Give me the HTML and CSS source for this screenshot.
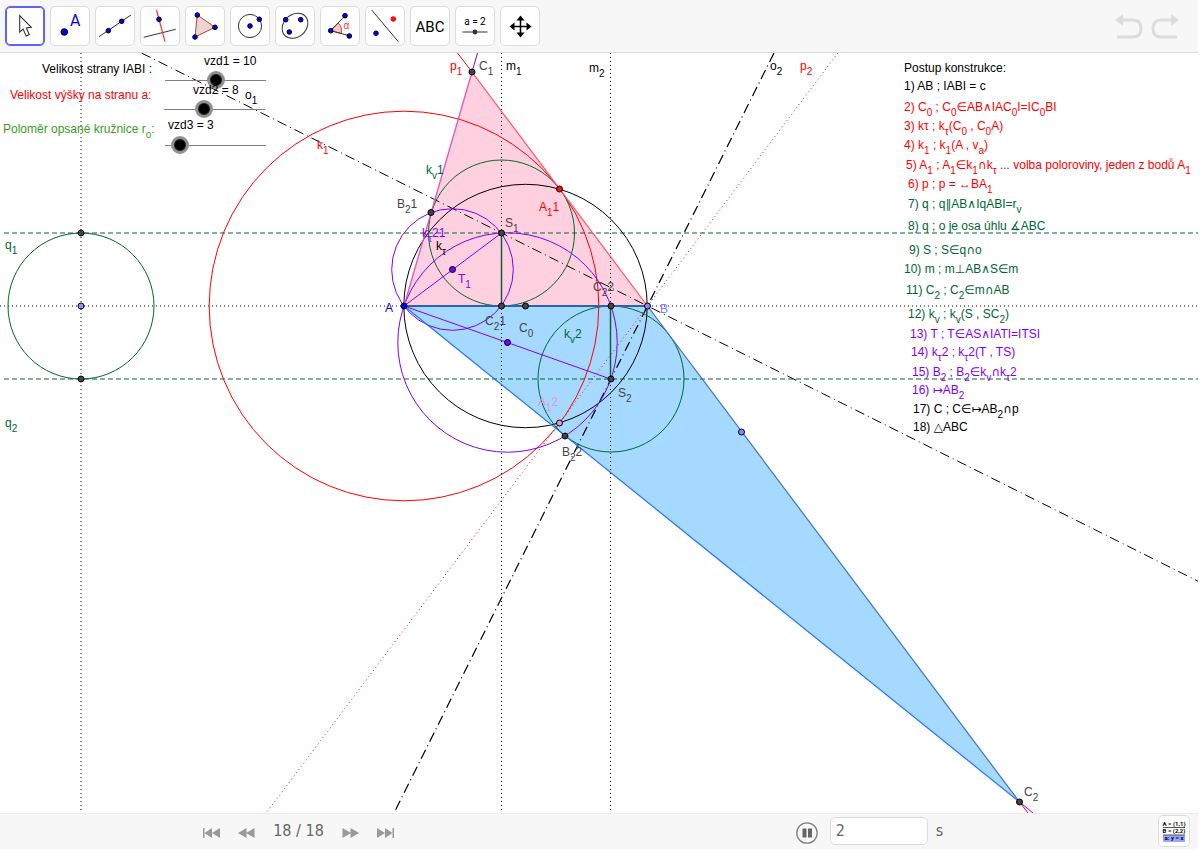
FILE: index.html
```html
<!DOCTYPE html>
<html lang="cs">
<head>
    <meta charset="UTF-8">
    <meta name="viewport" content="width=device-width, initial-scale=1.0">
    <title>Konstrukce trojúhelníku</title>
    <link rel="stylesheet" href="styles.css">
</head>
<body>
    <header class="toolbar">
        <button class="tool selected" aria-label="Move">
            <svg viewBox="1 1 38 38"><path d="M14.7 9.7V26l3.4-2.9 3.1 7 3.1-1.5-3-6.7 5-.6z" fill="#fff" stroke="#333" stroke-width="1.1"/></svg>
        </button>
        <button class="tool" aria-label="Point">
            <svg viewBox="1 1 38 38"><circle cx="14.3" cy="26" r="3.3" class="dot"/><text x="20" y="20" class="icon-a">A</text></svg>
        </button>
        <button class="tool" aria-label="Line">
            <svg viewBox="1 1 38 38"><path d="M4 30.7L36 9" class="thin"/><circle cx="13.3" cy="24.7" r="2.3" class="dot"/><circle cx="26.7" cy="15.3" r="2.3" class="dot"/></svg>
        </button>
        <button class="tool" aria-label="Perpendicular line">
            <svg viewBox="1 1 38 38"><path d="M3.7 31.3l32-8" class="thin"/><path d="M16.5 4L25 35.7" stroke="#f33" stroke-width="1.2"/><circle cx="19" cy="13.3" r="2.3" class="dot"/></svg>
        </button>
        <button class="tool" aria-label="Polygon">
            <svg viewBox="1 1 38 38"><path d="M12.3 9L30 21.3 10 31z" fill="#ebd5cf" stroke="#b04040" stroke-width="1"/><circle cx="12.3" cy="9" r="2.3" class="dot"/><circle cx="30" cy="21.3" r="2.3" class="dot"/><circle cx="10" cy="31" r="2.3" class="dot"/></svg>
        </button>
        <button class="tool" aria-label="Circle">
            <svg viewBox="1 1 38 38"><circle cx="20" cy="20" r="11.6" class="thin"/><circle cx="20" cy="20" r="2.3" class="dot"/><circle cx="29.3" cy="13.3" r="2.3" class="dot"/></svg>
        </button>
        <button class="tool" aria-label="Ellipse">
            <svg viewBox="1 1 38 38"><ellipse cx="20" cy="19.8" rx="14" ry="11.2" transform="rotate(-42 20 19.8)" class="thin"/><circle cx="10.7" cy="13.7" r="2.3" class="dot"/><circle cx="25.7" cy="13.7" r="2.3" class="dot"/><circle cx="14.3" cy="26" r="2.3" class="dot"/></svg>
        </button>
        <button class="tool" aria-label="Angle">
            <svg viewBox="1 1 38 38"><path d="M10.7 24.7L18.2 17a10.8 10.8 0 0 1 3 10.4z" fill="#fbc8c8" stroke="#f33" stroke-width="1"/><path d="M25 9.7L10.7 24.7l18.6 5" class="thin"/><circle cx="10.7" cy="24.7" r="2.3" class="dot"/><circle cx="25" cy="9.7" r="2.3" class="dot"/><circle cx="29.3" cy="30" r="2.3" class="dot"/><text x="23.5" y="23" class="icon-alpha">α</text></svg>
        </button>
        <button class="tool" aria-label="Reflect about line">
            <svg viewBox="1 1 38 38"><path d="M6.7 4l26.6 31.7" class="thin"/><circle cx="28.3" cy="13" r="2.3" class="dot red"/><circle cx="11" cy="27.3" r="2.3" class="dot"/></svg>
        </button>
        <button class="tool" aria-label="Text">
            <svg viewBox="1 1 38 38"><text x="20" y="26" class="icon-abc">ABC</text></svg>
        </button>
        <button class="tool" aria-label="Slider">
            <svg viewBox="1 1 38 38"><text x="20" y="19" class="icon-slider">a = 2</text><path d="M7.5 26h25" class="thin"/><circle cx="20" cy="26" r="2.4" fill="#333"/></svg>
        </button>
        <button class="tool" aria-label="Move graphics view">
            <svg viewBox="1 1 38 38"><path d="M12 20.5h17M20.5 12v17" stroke="#000" stroke-width="1.5"/><path d="M9.5 20.5l5-4v8zM31.5 20.5l-5-4v8zM20.5 9.5l-4 5h8zM20.5 31.5l-4-5h8z" fill="#000"/></svg>
        </button>
        <div class="history">
            <button aria-label="Undo" disabled>
                <svg width="29" height="26" viewBox="0 0 29 26"><path d="M8 7h11q8 0 8 8.500t-8 8.500H3" class="arc"/><path d="M1 7l8-6v12z" class="head"/></svg>
            </button>
            <button aria-label="Redo" disabled>
                <svg width="29" height="26" viewBox="0 0 29 26"><path d="M21 7H10q-8 0-8 8.500t8 8.500h16" class="arc"/><path d="M28 7l-8-6v12z" class="head"/></svg>
            </button>
        </div>
    </header>

    <main class="canvas">
        <svg class="drawing">
            <g transform="translate(0 -53)">
                <!-- triangles -->
                <path d="M404 306L647.500 306 472 72z" fill="#ffd0e0"/>
                <path d="M404 306L647.500 306 1019.500 802z" fill="#a6d9ff"/>

                <!-- axes, parallels and bisectors -->
                <path d="M81 53V813M501.500 53V813M610.500 53V813M0 306H2000" class="dotted"/>
                <path d="M4 233H2000M4 379H2000" class="dashed"/>
                <path d="M141.500 53L1198 581.200" class="dashdot"/>
                <path d="M774 53L394 813" class="dashdot strong"/>
                <path d="M837.800 53L266.200 813" class="dotted p2"/>

                <!-- circles -->
                <circle cx="81" cy="306" r="73" class="green"/>
                <circle cx="404" cy="306" r="194.800" class="red"/>
                <circle cx="525.500" cy="306" r="121.700" class="black"/>
                <circle cx="501.500" cy="233" r="73" class="green"/>
                <circle cx="611" cy="379" r="73" class="green"/>
                <circle cx="452.500" cy="269.500" r="60.800" class="purple"/>
                <circle cx="507.500" cy="342.500" r="109.700" class="purple"/>

                <!-- segments -->
                <path d="M404 306L501.500 233M404 306L610.500 379" class="purple"/>
                <path d="M472 72L477.500 53M1019.500 802L1033 813" class="purple"/>
                <path d="M472 72L457.500 53M1019.500 802L1028 813" class="red"/>
                <path d="M501.500 233V306M610.500 306V379" class="radius"/>
                <path d="M404 306L472 72" stroke="#e055bb" stroke-width="1.300"/>
                <path d="M472 72L647.500 306" stroke="#ff5566" stroke-width="1.200"/>
                <path d="M404 306L1019.500 802" stroke="#1f74ff" stroke-width="1.200"/>
                <path d="M647.500 306L1019.500 802" stroke="#4770b8" stroke-width="1.200"/>
                <path d="M404 306H647.500" stroke="#2d62b0" stroke-width="2"/>

                <!-- points -->
                <g class="points">
                    <circle cx="81" cy="233" r="3"/>
                    <circle cx="81" cy="306" r="3" fill="#9090ff"/>
                    <circle cx="81" cy="379" r="3"/>
                    <circle cx="404" cy="306" r="3" fill="#0000ff"/>
                    <circle cx="501.500" cy="306" r="3"/>
                    <circle cx="525.500" cy="306" r="3"/>
                    <circle cx="611" cy="306" r="3"/>
                    <circle cx="647.500" cy="306" r="3" fill="#8888ff"/>
                    <circle cx="472" cy="72" r="3"/>
                    <circle cx="431" cy="212.500" r="3"/>
                    <circle cx="501.500" cy="233" r="3"/>
                    <circle cx="559.500" cy="189" r="3" fill="#ff1010"/>
                    <circle cx="452.500" cy="269.500" r="3" fill="#7d00ff"/>
                    <circle cx="507.500" cy="342.500" r="3" fill="#7d00ff"/>
                    <circle cx="611" cy="379" r="3"/>
                    <circle cx="559.500" cy="423" r="3" fill="#e896cc"/>
                    <circle cx="565" cy="436" r="3"/>
                    <circle cx="741.500" cy="432" r="3" fill="#8888ff"/>
                    <circle cx="1019.500" cy="802" r="3"/>
                </g>

                <!-- point and line labels -->
                <g class="c-gray">
                    <text x="479" y="70">C<tspan class="sub" dy="5">1</tspan></text>
                    <text x="397" y="208">B<tspan class="sub" dy="5">2</tspan><tspan dy="-5">1</tspan></text>
                    <text x="505" y="227">S<tspan class="sub" dy="5">1</tspan></text>
                    <text x="593" y="291">C<tspan class="sub" dy="5">2</tspan><tspan dy="-5">2</tspan></text>
                    <text x="485" y="325">C<tspan class="sub" dy="5">2</tspan><tspan dy="-5">1</tspan></text>
                    <text x="519" y="332">C<tspan class="sub" dy="5">0</tspan></text>
                    <text x="618" y="397">S<tspan class="sub" dy="5">2</tspan></text>
                    <text x="562" y="456">B<tspan class="sub" dy="5">2</tspan><tspan dy="-5">2</tspan></text>
                    <text x="1024" y="796">C<tspan class="sub" dy="5">2</tspan></text>
                </g>
                <g class="c-black">
                    <text x="42" y="73">Velikost strany IABI :</text>
                    <text x="245" y="99">o<tspan class="sub" dy="5">1</tspan></text>
                    <text x="506" y="70">m<tspan class="sub" dy="5">1</tspan></text>
                    <text x="589" y="72">m<tspan class="sub" dy="5">2</tspan></text>
                    <text x="770" y="70">o<tspan class="sub" dy="5">2</tspan></text>
                    <text x="436" y="250">k<tspan class="sub" dy="5">τ</tspan></text>
                </g>
                <g class="c-red">
                    <text x="10" y="99">Velikost výšky na stranu a:</text>
                    <text x="450" y="70">p<tspan class="sub" dy="5">1</tspan></text>
                    <text x="800" y="70">p<tspan class="sub" dy="5">2</tspan></text>
                    <text x="317" y="149">k<tspan class="sub" dy="5">1</tspan></text>
                    <text x="539" y="211">A<tspan class="sub" dy="5">1</tspan><tspan dy="-5">1</tspan></text>
                </g>
                <text x="3" y="133" fill="#38a01c">Poloměr opsané kružnice r<tspan class="sub" dy="5">o</tspan><tspan dy="-5">:</tspan></text>
                <g class="c-green">
                    <text x="426" y="174">k<tspan class="sub" dy="5">v</tspan><tspan dy="-5">1</tspan></text>
                    <text x="564" y="338">k<tspan class="sub" dy="5">v</tspan><tspan dy="-5">2</tspan></text>
                    <text x="5" y="249">q<tspan class="sub" dy="5">1</tspan></text>
                    <text x="5" y="427">q<tspan class="sub" dy="5">2</tspan></text>
                </g>
                <g class="c-purple">
                    <text x="422" y="237">k<tspan class="sub" dy="5">τ</tspan><tspan dy="-5">21</tspan></text>
                    <text x="458" y="283">T<tspan class="sub" dy="5">1</tspan></text>
                </g>
                <text x="385" y="312" fill="#0000ff">A</text>
                <text x="660" y="313" fill="#8080ff">B</text>
                <text x="538" y="406" fill="#e896cc">A<tspan class="sub" dy="5">1</tspan><tspan dy="-5">2</tspan></text>

                <!-- construction steps -->
                <g class="c-black">
                    <text x="904" y="72">Postup konstrukce:</text>
                    <text x="904" y="90">1) AB ; IABI = c</text>
                </g>
                <g class="c-red">
                    <text x="904" y="111">2) C<tspan class="sub" dy="5">0</tspan><tspan dy="-5"> ; C</tspan><tspan class="sub" dy="5">0</tspan><tspan dy="-5">∈AB∧IAC</tspan><tspan class="sub" dy="5">0</tspan><tspan dy="-5">I=IC</tspan><tspan class="sub" dy="5">0</tspan><tspan dy="-5">BI</tspan></text>
                    <text x="904" y="130">3) kτ ; k<tspan class="sub" dy="5">τ</tspan><tspan dy="-5">(C</tspan><tspan class="sub" dy="5">0</tspan><tspan dy="-5"> , C</tspan><tspan class="sub" dy="5">0</tspan><tspan dy="-5">A)</tspan></text>
                    <text x="904" y="149">4) k<tspan class="sub" dy="5">1</tspan><tspan dy="-5"> ; k</tspan><tspan class="sub" dy="5">1</tspan><tspan dy="-5">(A , v</tspan><tspan class="sub" dy="5">a</tspan><tspan dy="-5">)</tspan></text>
                    <text x="906" y="169">5) A<tspan class="sub" dy="5">1</tspan><tspan dy="-5"> ; A</tspan><tspan class="sub" dy="5">1</tspan><tspan dy="-5">∈k</tspan><tspan class="sub" dy="5">1</tspan><tspan class="sym" dy="-5">∩</tspan>k<tspan class="sub" dy="5">τ</tspan><tspan dy="-5"> ... volba poloroviny, jeden z bodů A</tspan><tspan class="sub" dy="5">1</tspan></text>
                    <text x="908" y="188">6) p ; p = ↔BA<tspan class="sub" dy="5">1</tspan></text>
                </g>
                <g class="c-green">
                    <text x="908" y="208">7) q ; q∥AB∧IqABI=r<tspan class="sub" dy="5">v</tspan></text>
                    <text x="908" y="230">8) q ; o je osa úhlu ∡ABC</text>
                    <text x="909" y="254">9) S ; S∈q<tspan class="sym">∩</tspan>o</text>
                    <text x="904" y="273">10) m ; m⊥AB∧S∈m</text>
                    <text x="906" y="294">11) C<tspan class="sub" dy="5">2</tspan><tspan dy="-5"> ; C</tspan><tspan class="sub" dy="5">2</tspan><tspan dy="-5">∈m</tspan><tspan class="sym">∩</tspan>AB</text>
                    <text x="908" y="318">12) k<tspan class="sub" dy="5">v</tspan><tspan dy="-5"> ; k</tspan><tspan class="sub" dy="5">v</tspan><tspan dy="-5">(S , SC</tspan><tspan class="sub" dy="5">2</tspan><tspan dy="-5">)</tspan></text>
                </g>
                <g class="c-purple">
                    <text x="910" y="338">13) T ; T∈AS∧IATI=ITSI</text>
                    <text x="911" y="356">14) k<tspan class="sub" dy="5">τ</tspan><tspan dy="-5">2 ; k</tspan><tspan class="sub" dy="5">τ</tspan><tspan dy="-5">2(T , TS)</tspan></text>
                    <text x="912" y="376">15) B<tspan class="sub" dy="5">2</tspan><tspan dy="-5"> ; B</tspan><tspan class="sub" dy="5">2</tspan><tspan dy="-5">∈k</tspan><tspan class="sub" dy="5">v</tspan><tspan class="sym" dy="-5">∩</tspan>k<tspan class="sub" dy="5">τ</tspan><tspan dy="-5">2</tspan></text>
                    <text x="912" y="394">16) ↦AB<tspan class="sub" dy="5">2</tspan></text>
                </g>
                <g class="c-black">
                    <text x="913" y="413">17) C ; C∈↦AB<tspan class="sub" dy="5">2</tspan><tspan class="sym" dy="-5">∩</tspan>p</text>
                    <text x="913" y="431">18) △ABC</text>
                </g>
            </g>
        </svg>

        <input class="slider slider1" type="range" id="vzd1" min="0" max="20" value="10">
        <input class="slider slider2" type="range" id="vzd2" min="0" max="20" value="8">
        <input class="slider slider3" type="range" id="vzd3" min="0" max="20" value="3">
        <label class="slider-label label1" for="vzd1">vzd1 = 10</label>
        <label class="slider-label label2" for="vzd2">vzd2 = 8</label>
        <label class="slider-label label3" for="vzd3">vzd3 = 3</label>
    </main>

    <footer class="navbar">
        <div class="steps">
            <button aria-label="First step"><svg width="17" height="12" viewBox="0 0 17 12"><path d="M0 1h1.500v10H0zM9 1v10L1.500 6zM17 1v10L9 6z"/></svg></button>
            <button aria-label="Previous step"><svg width="17" height="12" viewBox="0 0 17 12"><path d="M8.500 1v10L0 6zM16.500 1v10L8 6z"/></svg></button>
            <span>18 / 18</span>
            <button aria-label="Next step"><svg width="17" height="12" viewBox="0 0 17 12"><path d="M.5 1v10L9 6zM8.500 1v10L17 6z"/></svg></button>
            <button aria-label="Last step"><svg width="17" height="12" viewBox="0 0 17 12"><path d="M0 1v10l8-5zM8 1v10l7.500-5zM15.500 1H17v10h-1.500z"/></svg></button>
        </div>
        <div class="player">
            <button aria-label="Pause"><svg width="22" height="22" viewBox="0 0 22 22"><circle cx="11" cy="11" r="10.200" fill="none" stroke="#808080" stroke-width="1.300"/><path d="M6.500 6.500h4v9h-4zM12 6.500h4v9h-4z" fill="#666"/></svg></button>
            <input type="text" id="speed" value="2">
            <label for="speed">s</label>
        </div>
        <button class="algebra" aria-label="Algebra input">
            <svg width="24" height="24" viewBox="0 0 24 24">
                <rect x="1" y="16" width="22" height="7" rx="1" fill="#9aa5ff"/>
                <path d="M1 8.500h22M1 16h22" stroke="#555" stroke-width="1"/>
                <text x="12" y="7">A = (1,1)</text>
                <text x="12" y="14">B = (2,2)</text>
                <text x="12" y="21">a: y = x</text>
            </svg>
        </button>
    </footer>
</body>
</html>
```
FILE: styles.css
```css
* {
    box-sizing: border-box;
}

body {
    margin: 0;
    padding: 0 2px 1px 0;
    height: 100vh;
    display: flex;
    flex-direction: column;
    background-color: #fff;
    font-family: "Liberation Sans", Arial, "DejaVu Sans", sans-serif;
    font-size: 12px;
}

button {
    padding: 0;
    border: none;
    background: none;
    cursor: pointer;
}

svg {
    display: block;
}

/* toolbar */
.toolbar {
    display: flex;
    align-items: center;
    gap: 5px;
    padding: 6px 5px;
    background-color: #f7f7f7;
    border-bottom: 1px solid #dcdcdc;
}

.tool {
    width: 40px;
    height: 40px;
    background-color: #fff;
    border: 1px solid #dcdcdc;
    border-radius: 5px;
}

.tool.selected {
    border-color: #6161ff;
    box-shadow: inset 0 0 0 1px #6161ff;
}

.tool svg {
    width: 38px;
    height: 38px;
}

.thin {
    fill: none;
    stroke: #333;
    stroke-width: 1;
}

.dot {
    fill: #0000ff;
    stroke: #000;
    stroke-width: 1;
}

.dot.red {
    fill: #ff1010;
}

.icon-a {
    font-family: Roboto, sans-serif;
    font-size: 16px;
    fill: #0000ff;
}

.icon-alpha {
    font-size: 10px;
    fill: #ff3333;
}

.icon-abc {
    font-family: Roboto, sans-serif;
    font-size: 15px;
    text-anchor: middle;
}

.icon-slider {
    font-family: Roboto, sans-serif;
    font-size: 10px;
    text-anchor: middle;
}

.history {
    display: flex;
    gap: 8px;
    margin-left: auto;
    padding-right: 13px;
}

.arc {
    fill: none;
    stroke: #dcdcdc;
    stroke-width: 3;
}

.head {
    fill: #dcdcdc;
}

/* drawing */
.canvas {
    position: relative;
    flex: 1;
    min-height: 0;
    overflow: hidden;
}

.drawing {
    width: 100%;
    height: 100%;
}

.sub {
    font-size: 10px;
}

.sym {
    font-family: "DejaVu Sans", sans-serif;
}

.dotted {
    fill: none;
    stroke: #000;
    stroke-width: 1;
    stroke-dasharray: 1 3;
}

.dotted.p2 {
    stroke: #ff0022;
}

.dashed {
    stroke: #006633;
    stroke-width: 1;
    stroke-dasharray: 5 3;
}

.dashdot {
    stroke: #000;
    stroke-width: 1;
    stroke-dasharray: 10 4 1 4;
}

.dashdot.strong {
    stroke-width: 1.2;
}

.green, .red, .black, .purple {
    fill: none;
    stroke-width: 1;
}

.green { stroke: #006633; }
.red { stroke: #ff0000; }
.black { stroke: #000; }
.purple { stroke: #7d00ff; }

.radius {
    stroke: #1a5c3c;
    stroke-width: 1.5;
}

.points {
    fill: #444;
    stroke: #000;
    stroke-width: 1;
}

.c-black { fill: #000; }
.c-gray { fill: #444; }
.c-red { fill: #ff0000; }
.c-green { fill: #006633; }
.c-purple { fill: #7d00ff; }

/* sliders on the drawing */
.slider {
    position: absolute;
    appearance: none;
    width: 119px;
    height: 18px;
    margin: 0;
    background: linear-gradient(#808080, #808080) center / calc(100% - 18px) 1px no-repeat;
}

.slider::-webkit-slider-thumb {
    appearance: none;
    width: 18px;
    height: 18px;
    border: 3px solid #909090;
    border-radius: 50%;
    background-color: #000;
    box-shadow: inset 0 0 0 1px #222;
}

.slider1 { left: 156px; top: 18px; }
.slider2 { left: 155px; top: 47px; }
.slider3 { left: 156px; top: 83px; }

.slider-label {
    position: absolute;
    line-height: 14px;
}

.label1 { left: 204px; top: 1px; }
.label2 { left: 193px; top: 30px; }
.label3 { left: 168px; top: 65px; }

/* bottom bar */
.navbar {
    display: grid;
    grid-template-columns: 1fr 1fr 40px;
    align-items: center;
    height: 36px;
    padding-bottom: 2px;
    background-color: #f7f7f7;
    border-top: 1px solid #ececec;
    font-family: "DejaVu Sans Condensed", "DejaVu Sans", sans-serif;
    font-size: 16px;
    color: #666;
}

.steps {
    display: flex;
    align-items: center;
    justify-content: center;
    gap: 18px;
    padding-left: 18px;
}

.steps button {
    padding-top: 4px;
}

.steps svg {
    fill: #999;
}

.player {
    display: flex;
    align-items: center;
    justify-content: center;
    padding-left: 2px;
}

.player button {
    padding-top: 4px;
    margin-right: 12px;
}

.player input {
    width: 98px;
    height: 28px;
    margin-right: 8px;
    padding: 0 5px;
    border: 1px solid #dcdcdc;
    border-radius: 5px;
    background-color: #fff;
    font: inherit;
    color: inherit;
}

.algebra {
    display: flex;
    align-items: center;
    justify-content: center;
    width: 32px;
    height: 32px;
    border: 1px solid #dcdcdc;
    border-radius: 5px;
    background-color: #fff;
}

.algebra text {
    font-family: Roboto, sans-serif;
    font-size: 6px;
    font-weight: bold;
    text-anchor: middle;
}
```
